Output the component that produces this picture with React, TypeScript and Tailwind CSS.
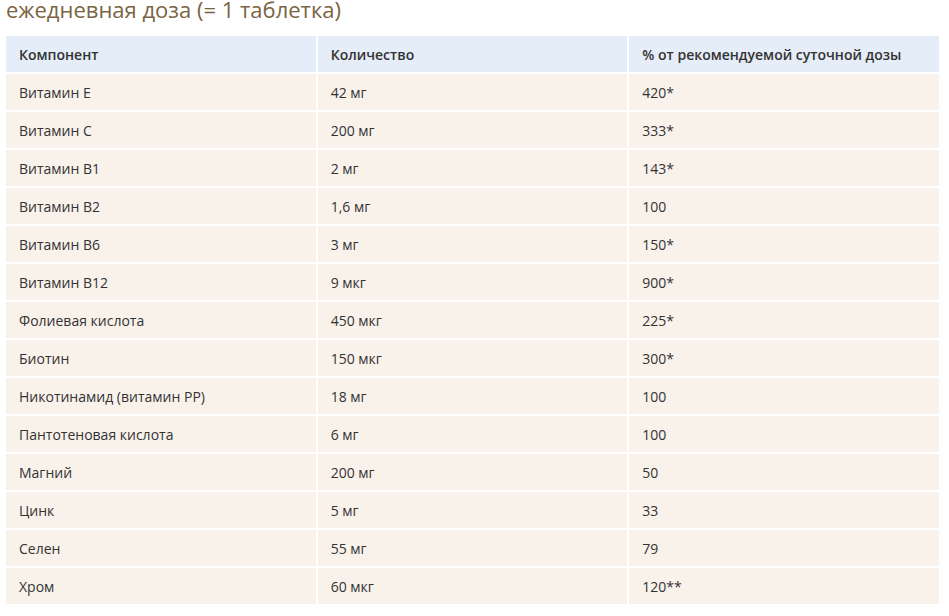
import React from "react";

const rows: [string, string, string][] = [
  ["Витамин Е", "42 мг", "420*"],
  ["Витамин С", "200 мг", "333*"],
  ["Витамин В1", "2 мг", "143*"],
  ["Витамин В2", "1,6 мг", "100"],
  ["Витамин В6", "3 мг", "150*"],
  ["Витамин В12", "9 мкг", "900*"],
  ["Фолиевая кислота", "450 мкг", "225*"],
  ["Биотин", "150 мкг", "300*"],
  ["Никотинамид (витамин РР)", "18 мг", "100"],
  ["Пантотеновая кислота", "6 мг", "100"],
  ["Магний", "200 мг", "50"],
  ["Цинк", "5 мг", "33"],
  ["Селен", "55 мг", "79"],
  ["Хром", "60 мкг", "120**"],
];

export default function App() {
  return (
    <div
      className="bg-white w-[949px] h-[616px] overflow-hidden"
      style={{ fontFamily: '"Open Sans", "Noto Sans", sans-serif' }}
    >
      <div className="pl-[6px] -mt-[6px] h-[42px] text-[22px] leading-[30px] text-[#7a6443]">
        ежедневная доза (= 1 таблетка)
      </div>
      <div className="ml-[6px] w-[933px] grid grid-cols-3 gap-[2px] text-[14px] text-[#333333]">
        <div className="h-[36px] bg-[#e4edf8] pl-[13px] flex items-center font-semibold">Компонент</div>
        <div className="h-[36px] bg-[#e4edf8] pl-[13px] flex items-center font-semibold">Количество</div>
        <div className="h-[36px] bg-[#e4edf8] pl-[13px] flex items-center font-semibold">% от рекомендуемой суточной дозы</div>
        {rows.map((r, i) => (
          <React.Fragment key={i}>
            <div className="h-[36px] bg-[#f9f2eb] pl-[13px] flex items-center">{r[0]}</div>
            <div className="h-[36px] bg-[#f9f2eb] pl-[13px] flex items-center">{r[1]}</div>
            <div className="h-[36px] bg-[#f9f2eb] pl-[13px] flex items-center">{r[2]}</div>
          </React.Fragment>
        ))}
      </div>
    </div>
  );
}
